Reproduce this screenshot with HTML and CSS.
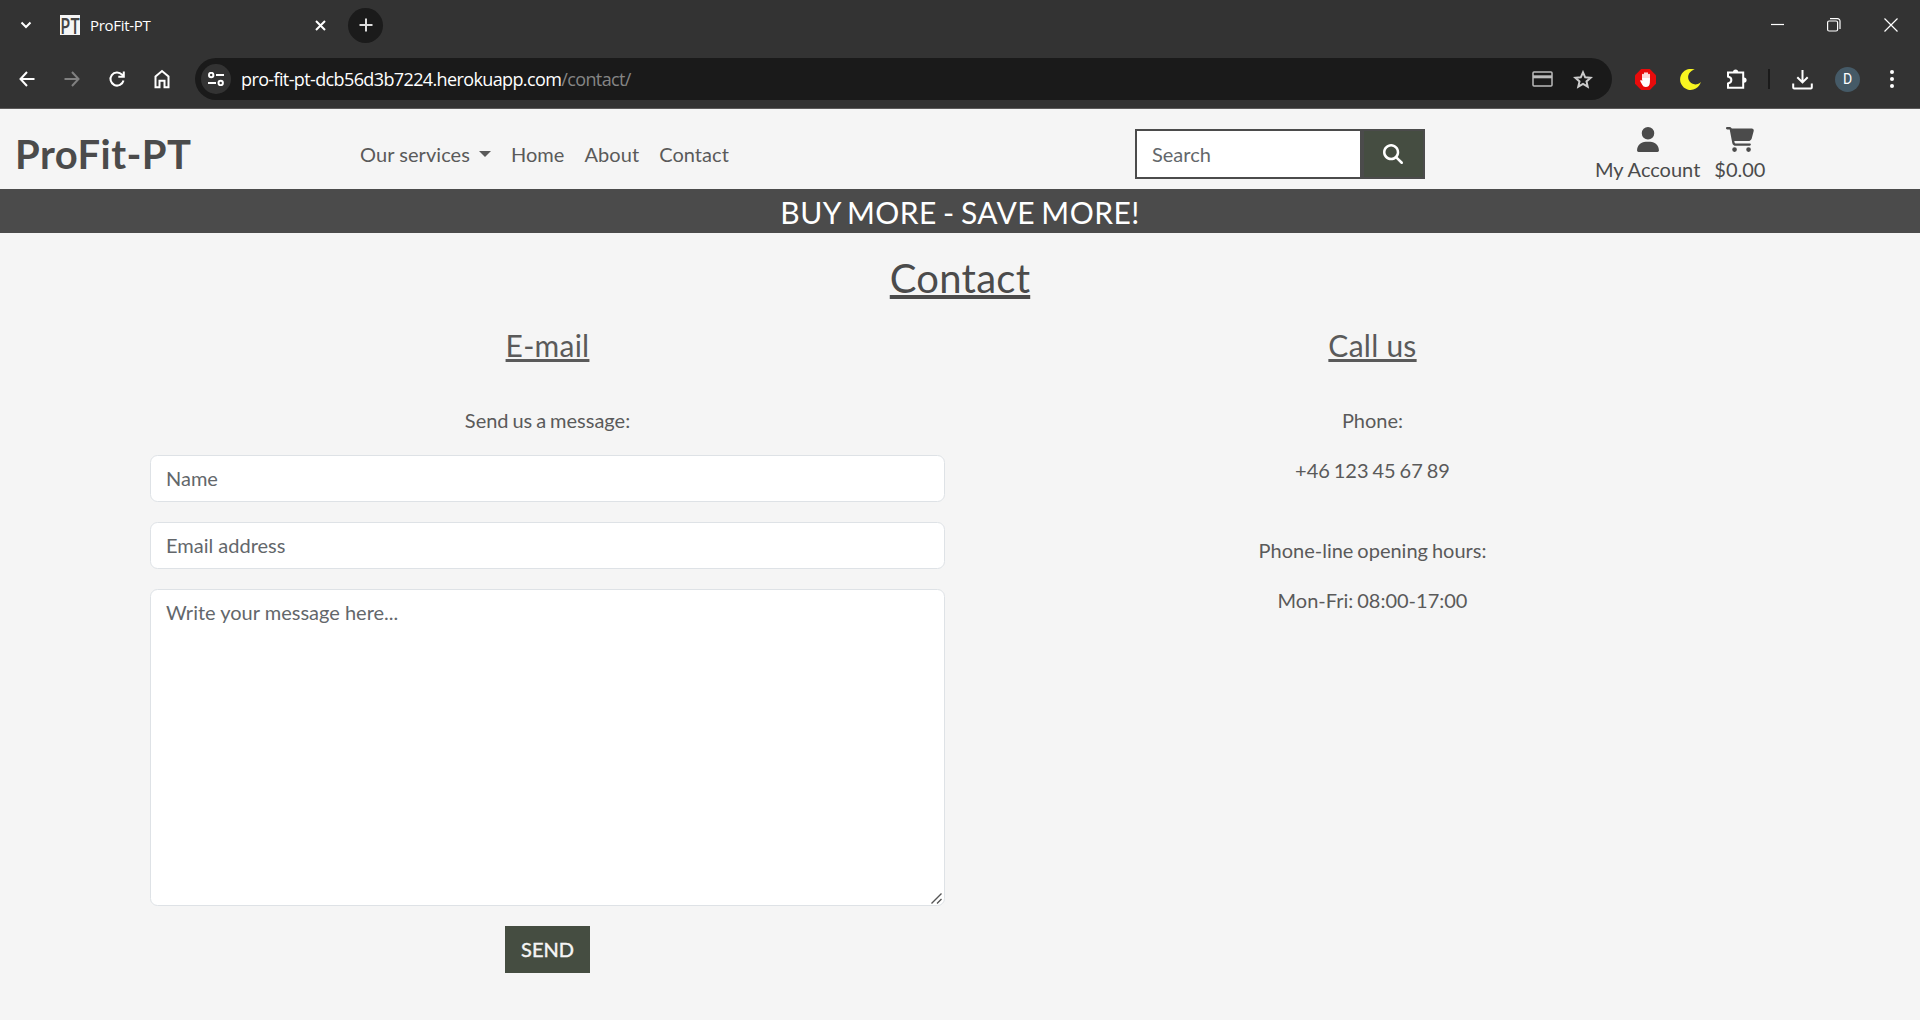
FILE: index.html
```html
<!DOCTYPE html>
<html lang="en">
<head>
<meta charset="utf-8">
<title>ProFit-PT</title>
<link rel="stylesheet" href="styles.css">
</head>
<body>
<div class="browser">
  <div class="tabs">
    <svg class="chevron" width="12" height="8" viewBox="0 0 12 8"><path d="M1.500 1.500 6 6l4.500-4.500"/></svg>
    <span class="favicon"><span class="favicon-text">PT</span></span>
    <span class="tab-title">ProFit-PT</span>
    <svg class="tab-close" width="11" height="11" viewBox="0 0 11 11"><path d="M1 1l9 9M10 1l-9 9"/></svg>
    <span class="new-tab"><svg width="14" height="14" viewBox="0 0 14 14"><path d="M7 .5v13M.5 7h13"/></svg></span>
    <div class="window-controls">
      <svg width="14" height="14" viewBox="0 0 14 14"><path d="M1 6.500h13"/></svg>
      <svg width="14" height="14" viewBox="0 0 14 14"><rect x=".6" y="3" width="10" height="10" rx="1.500"/><path d="M3 .7h7.500a2.500 2.500 0 0 1 2.500 2.500V11"/></svg>
      <svg width="14" height="14" viewBox="0 0 14 14"><path d="M.5.500l13 13M13.500.500l-13 13"/></svg>
    </div>
  </div>
  <div class="toolbar">
    <div class="nav-buttons">
      <svg width="18" height="18" viewBox="0 0 18 18"><path d="M16.500 9H3M9 2 2.500 9 9 16"/></svg>
      <svg class="disabled" width="18" height="18" viewBox="0 0 18 18"><path d="M1.500 9H15M9 2l6.500 7L9 16"/></svg>
      <svg width="18" height="18" viewBox="0 0 18 18"><path d="M15.500 10.500A6.600 6.600 0 1 1 14 4.600L15.500 6M15.800 1.500v5.300h-5.500"/></svg>
      <svg width="18" height="20" viewBox="0 0 18 20"><path d="M2.500 7.500 9 2l6.500 5.500v10.800h-4v-6.500h-5v6.500h-4z"/></svg>
    </div>
    <div class="omnibox">
      <span class="site-info"><svg width="16" height="14" viewBox="0 0 16 14"><circle cx="3.200" cy="3" r="2.200"/><path d="M8 3h8M0 11h8"/><circle cx="12.700" cy="11" r="2.200"/></svg></span>
      <span class="url">pro-fit-pt-dcb56d3b7224.herokuapp.com<span class="url-path">/contact/</span></span>
      <svg class="card" width="21" height="16" viewBox="0 0 21 16"><rect x="1" y="1" width="19" height="14" rx="1"/><path d="M1 5.800h19" stroke-width="3"/></svg>
      <svg class="star" width="20" height="19" viewBox="0 0 20 19"><path d="M10 2.300l2.200 5 5.400.5-4.100 3.600 1.200 5.300L10 13.900l-4.700 2.800 1.200-5.300L2.400 7.800l5.400-.5z"/></svg>
    </div>
    <div class="extensions">
      <svg class="blocker" width="21" height="21" viewBox="0 0 21 21"><path fill="#e80b0b" d="M6.200 0h8.600L21 6.200v8.600L14.800 21H6.200L0 14.800V6.200z"/><path fill="none" stroke="#fff" stroke-width="1.700" stroke-linecap="round" d="M8 10V5.500M10 9V4M12 9V4M14 11V5.500"/><path fill="#fff" d="M7.200 9h7.700v4.500q-.3 4.500-4.200 4.500-2.500 0-3.500-2.300L5.200 12q0-1.200 1-1.100l1 1z"/></svg>
      <svg class="moon" width="21" height="21" viewBox="0 0 21 21"><path fill="#f8f520" d="M14.800.8A7.300 7.300 0 1 0 20.800 13 10.500 10.500 0 1 1 14.800.8z"/></svg>
      <svg class="puzzle" width="21" height="21" viewBox="0 0 21 21"><path d="M2 3.500h15.200v15.300H2v-4.200c4.500-1 4.500-6 0-7z"/><path class="solid" d="M7 3a2.600 2.600 0 0 1 5.200 0zM18 8.500a2.600 2.600 0 0 1 0 5.200z"/></svg>
      <span class="divider"></span>
      <svg class="download" width="21" height="21" viewBox="0 0 21 21"><path d="M10.500 1v12M5.300 8.200l5.200 5.200 5.200-5.200M1.200 14.500v4q0 1 1 1h16.600q1 0 1-1v-4"/></svg>
      <span class="avatar">D</span>
      <svg class="kebab" width="4" height="18" viewBox="0 0 4 18"><circle cx="2" cy="2" r="2"/><circle cx="2" cy="9" r="2"/><circle cx="2" cy="16" r="2"/></svg>
    </div>
  </div>
</div>

<header class="site-header">
  <a class="brand">ProFit-PT</a>
  <nav class="site-nav">
    <a class="dropdown">Our services</a>
    <a>Home</a>
    <a>About</a>
    <a>Contact</a>
  </nav>
  <form class="search">
    <input type="text" placeholder="Search">
    <button type="button" aria-label="Search"><svg width="20" height="20" viewBox="0 0 512 512"><path d="M416 208c0 45.900-14.900 88.300-40 122.700L502.600 457.400c12.500 12.500 12.500 32.800 0 45.300s-32.800 12.500-45.300 0L330.700 376c-34.400 25.200-76.800 40-122.700 40C93.100 416 0 322.900 0 208S93.100 0 208 0S416 93.100 416 208zM208 352a144 144 0 1 0 0-288 144 144 0 1 0 0 288z"/></svg></button>
  </form>
  <div class="user-links">
    <a><svg width="22" height="25" viewBox="0 0 448 512"><path d="M224 256A128 128 0 1 0 224 0a128 128 0 1 0 0 256zm-45.700 48C79.800 304 0 383.800 0 482.300C0 498.700 13.300 512 29.700 512H418.300c16.400 0 29.700-13.300 29.700-29.700C448 383.800 368.200 304 269.700 304H178.300z"/></svg>My Account</a>
    <a><svg width="28" height="25" viewBox="0 0 576 512"><path d="M0 24C0 10.700 10.700 0 24 0H69.500c22 0 41.500 12.800 50.600 32h411c26.300 0 45.500 25 38.600 50.400l-41 152.300c-8.500 31.400-37 53.300-69.500 53.300H170.700l5.400 28.500c2.200 11.300 12.100 19.500 23.600 19.500H488c13.300 0 24 10.700 24 24s-10.700 24-24 24H199.700c-34.600 0-64.300-24.600-70.700-58.500L77.400 54.500c-.7-3.800-4-6.500-7.900-6.500H24C10.700 48 0 37.300 0 24zM128 464a48 48 0 1 1 96 0 48 48 0 1 1 -96 0zm336-48a48 48 0 1 1 0 96 48 48 0 1 1 0-96z"/></svg>$0.00</a>
  </div>
</header>
<div class="banner">BUY MORE - SAVE MORE!</div>

<main class="contact">
  <h1>Contact</h1>
  <div class="columns">
    <section class="column">
      <h2>E-mail</h2>
      <p>Send us a message:</p>
      <form class="message-form">
        <input type="text" placeholder="Name">
        <input type="email" placeholder="Email address">
        <div class="message-box">
          <textarea placeholder="Write your message here..."></textarea>
          <svg class="grip" width="11" height="11" viewBox="0 0 11 11"><path d="M.5 10.500l10-10M6 10.500l4.500-4.500"/></svg>
        </div>
        <button type="button">SEND</button>
      </form>
    </section>
    <section class="column">
      <h2>Call us</h2>
      <p>Phone:</p>
      <p class="phone-number">+46 123 45 67 89</p>
      <p>Phone-line opening hours:</p>
      <p>Mon-Fri: 08:00-17:00</p>
    </section>
  </div>
</main>
</body>
</html>
```
FILE: styles.css
```css
* { box-sizing: border-box; }

html, body { height: 100%; }

body {
  margin: 0;
  overflow: hidden;
  background: #f5f5f5;
  color: #4b4b4b;
  font: 400 20px/30px Lato, sans-serif;
}

svg { display: block; flex: none; }

/* Browser frame */
.browser {
  height: 109px;
  background: #333;
  border-bottom: 1px solid #5c5a5a;
  font-family: "Open Sans", "Noto Sans", sans-serif;
  color: #fff;
}

.browser svg { fill: none; stroke: #fff; stroke-width: 2; }

.tabs {
  display: flex;
  align-items: center;
  height: 50px;
  padding-left: 19.500px;
}

.favicon {
  display: flex;
  justify-content: center;
  width: 20px;
  height: 20px;
  margin-left: 28.500px;
  background: #f5f5f5;
}

.favicon-text {
  font: 600 22px/20px "Open Sans", sans-serif;
  color: #444;
  transform: scaleX(.74);
}

.tab-title {
  width: 219px;
  margin-left: 10px;
  font-size: 15px;
  letter-spacing: -.3px;
  line-height: 20px;
}

.tab-close { margin-left: 5.500px; }

.new-tab {
  display: flex;
  align-items: center;
  justify-content: center;
  width: 35px;
  height: 35px;
  margin-left: 22.500px;
  border-radius: 50%;
  background: #1b1b1b;
}

.new-tab svg { stroke: #ddd; }

.window-controls {
  display: flex;
  gap: 43px;
  margin-left: auto;
  padding-right: 22px;
}

.browser .window-controls svg { stroke-width: 1.2; }

.toolbar {
  display: flex;
  align-items: center;
  height: 58px;
  padding-left: 18px;
}

.nav-buttons {
  display: flex;
  align-items: center;
  gap: 27px;
  width: 177px;
}

.browser .nav-buttons .disabled { stroke: #808080; }

.omnibox {
  display: flex;
  align-items: center;
  width: 1417px;
  height: 42px;
  padding: 0 19.500px 0 6px;
  border-radius: 21px;
  background: #1a1a1a;
}

.site-info {
  display: flex;
  align-items: center;
  justify-content: center;
  width: 30px;
  height: 30px;
  border-radius: 50%;
  background: #333;
}

.url {
  margin-left: 10px;
  font-size: 18px;
  letter-spacing: -.62px;
  line-height: 24px;
}

.url-path { color: #858585; }

.omnibox .card { margin-left: auto; stroke: #bbb; stroke-width: 1.5; }
.omnibox .star { margin-left: 19.500px; stroke: #ccc; }

.extensions {
  display: flex;
  align-items: center;
  margin-left: 23px;
}

.browser .blocker, .browser .moon { stroke: none; }
.moon { margin-left: 24px; }
.puzzle { margin-left: 25px; }
.browser .puzzle .solid { fill: #fff; stroke: none; }

.divider {
  width: 2px;
  height: 20px;
  margin-left: 21px;
  background: #1a1a1a;
}

.download { margin-left: 22px; }

.avatar {
  width: 25px;
  height: 25px;
  margin-left: 22px;
  border-radius: 50%;
  background: #455a67;
  font: 14px/25px Roboto, sans-serif;
  text-align: center;
}

.browser .kebab { margin-left: 30px; fill: #fff; stroke: none; }

/* Site header */
.site-header {
  display: flex;
  align-items: center;
  height: 80px;
  padding: 0 16px 0 15px;
}

.brand {
  width: 345px;
  padding-top: 10px;
  font-size: 40px;
  font-weight: 700;
  letter-spacing: .45px;
  line-height: 60px;
}

.site-nav {
  display: flex;
  gap: 20px;
  width: 775px;
  padding-top: 10px;
  color: #5a5a5a;
  letter-spacing: .06px;
}

.dropdown::after {
  content: "";
  display: inline-block;
  margin-left: 9px;
  vertical-align: 5px;
  border-top: 6px solid;
  border-right: 6px solid transparent;
  border-left: 6px solid transparent;
}

.search {
  display: flex;
  width: 290px;
  height: 50px;
  margin-top: 10px;
}

.search input {
  width: 227px;
  padding: 0 15px;
  border: 2px solid #4b4b4b;
  border-radius: 0;
  font: inherit;
}

.search button {
  flex: 1;
  display: grid;
  place-items: center;
  padding: 0 2px 0 0;
  border: 2px solid #4b4b4b;
  background: #454d41;
}

.search svg { fill: #fff; }

.user-links {
  display: flex;
  gap: 14px;
  margin: 12px 0 0 170px;
}

.user-links a {
  display: flex;
  flex-direction: column;
  align-items: center;
}

.user-links svg { margin-bottom: 2px; fill: #4b4b4b; }

.banner {
  height: 44px;
  background: #4b4b4b;
  color: #fff;
  font-size: 30px;
  letter-spacing: .45px;
  word-spacing: -1.800px;
  line-height: 46px;
  text-align: center;
}

/* Contact page */
.contact {
  width: 1650px;
  margin: 0 auto;
  padding-top: 21px;
  text-align: center;
}

h1, h2 {
  font-weight: 400;
  letter-spacing: .25px;
  text-decoration: underline 3px;
}

h1 {
  margin: 0;
  font-size: 40px;
  line-height: 48px;
  text-decoration-thickness: 4px;
}

h2 { margin: 0 0 42px; font-size: 30px; line-height: 36px; }

.columns {
  display: grid;
  grid-template-columns: 1fr 1fr;
  padding-top: 25px;
  color: #5a5a5a;
}

.column { padding: 0 15px; }

p { margin: 0 0 20px; word-spacing: -1.200px; }

.phone-number { margin-bottom: 50px; }

.message-form input,
.message-form textarea {
  display: block;
  width: 100%;
  height: 47px;
  margin: 0 0 20px;
  padding: 6.500px 15px;
  border: 1px solid #dee2e6;
  border-radius: 7.500px;
  background: #fff;
  font: inherit;
}

.message-form input { padding: 6px 15px 8px; }

.message-form textarea { height: 317px; resize: none; }

.message-box { position: relative; }

.grip {
  position: absolute;
  right: 3px;
  bottom: 2px;
  fill: none;
  stroke: #555;
  stroke-width: 1.4;
}

::placeholder { color: #63676b; opacity: 1; }

.message-form button {
  width: 85px;
  height: 47px;
  padding: 0 0 2px;
  border: 0;
  background: #454d41;
  color: #f5f5f5;
  font: inherit;
  -webkit-text-stroke: .4px #f5f5f5;
}
```
